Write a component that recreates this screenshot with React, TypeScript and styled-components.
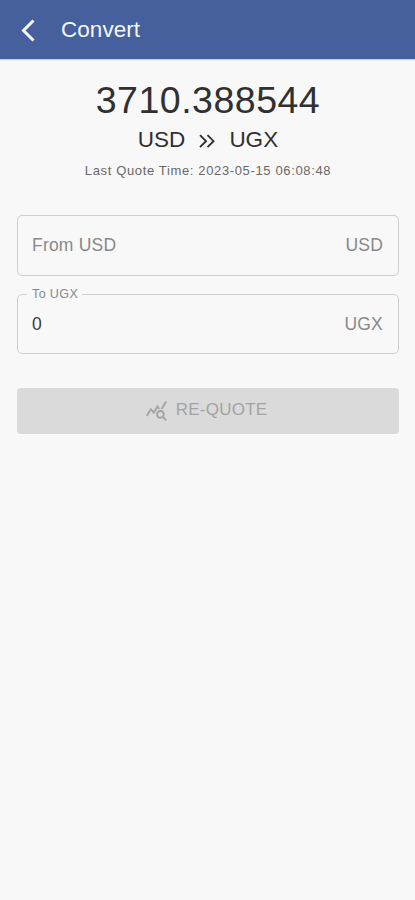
import React from "react";
import styled, { createGlobalStyle } from "styled-components";
import { MdQueryStats } from "react-icons/md";

const GlobalStyle = createGlobalStyle`
  * { box-sizing: border-box; }
  body {
    margin: 0;
    background: #f8f8f8;
    font-family: "Liberation Sans", Arial, sans-serif;
  }
`;

const Screen = styled.div`
  min-height: 900px;
  background: #f8f8f8;
`;

const AppBar = styled.header`
  display: flex;
  align-items: center;
  height: 59px;
  padding-left: 20px;
  background: #46609d;
  color: #f4f6fc;
  box-shadow: 0 1px 1px #c3cbe0;
`;

const BackButton = styled.button`
  display: flex;
  width: 16px;
  height: 26px;
  padding: 0;
  border: 0;
  background: none;
  color: inherit;
`;

const Title = styled.h1`
  margin: 0 0 0 25px;
  font-size: 22.5px;
  line-height: 26px;
  font-weight: 400;
  letter-spacing: 0.05px;
`;

const Content = styled.main`
  padding: 0 16px 0 17px;
`;

const Quote = styled.section`
  display: flex;
  flex-direction: column;
  align-items: center;
  padding-top: 19px;
`;

const Rate = styled.div`
  font-size: 37.5px;
  line-height: 44px;
  letter-spacing: 0.5px;
  color: #303030;
`;

const Pair = styled.div`
  display: flex;
  align-items: center;
  gap: 13px;
  margin-top: 4px;
  font-size: 22.5px;
  line-height: 28px;
  color: #303030;
`;

const QuoteTime = styled.div`
  margin-top: 8px;
  font-size: 13px;
  line-height: 18px;
  letter-spacing: 0.64px;
  color: #686868;
`;

const Fields = styled.div`
  display: flex;
  flex-direction: column;
  gap: 12px;
  margin-top: 35px;
`;

const Field = styled.fieldset`
  min-width: 0;
  margin: 0;
  padding: 0 15px 0 14px;
  border: 1px solid #cfcfcf;
  border-radius: 5px;
  font-size: 17.5px;
  letter-spacing: 0.2px;
  color: #888;
`;

const FieldRow = styled.div<{ $height: number; $lift?: number }>`
  display: flex;
  align-items: center;
  justify-content: space-between;
  height: ${(p) => p.$height}px;
  padding-bottom: ${(p) => p.$lift ?? 0}px;
`;

const Legend = styled.legend`
  margin-left: -5px;
  padding: 0 4px 0 5px;
  font-size: 12.5px;
  line-height: 13px;
  letter-spacing: 0.4px;
`;

const Value = styled.span<{ $filled?: boolean }>`
  color: ${(p) => (p.$filled ? "#383838" : "#888")};
`;

const Requote = styled.button`
  display: flex;
  align-items: center;
  justify-content: center;
  gap: 8px;
  width: 100%;
  height: 46px;
  margin-top: 34px;
  padding: 0 4px 2px 0;
  border: 0;
  border-radius: 4px;
  background: #dadada;
  color: #a3a3a3;
  font: 400 17px/24px "Liberation Sans", Arial, sans-serif;
  letter-spacing: 0.25px;
`;

const RequoteIcon = styled(MdQueryStats)`
  width: 23px;
  height: 23px;
  margin-top: 1px;
`;

export default function App() {
  return (
    <Screen>
      <GlobalStyle />
      <AppBar>
        <BackButton aria-label="Back">
          <svg width="16" height="26" viewBox="0 0 16 26" fill="none" stroke="currentColor" strokeWidth="3">
            <path d="M13.5 3.5L3.5 13.5L13.5 23.5" />
          </svg>
        </BackButton>
        <Title>Convert</Title>
      </AppBar>
      <Content>
        <Quote>
          <Rate>3710.388544</Rate>
          <Pair>
            <span>USD</span>
            <svg width="18" height="16" viewBox="0 0 18 16" fill="none" stroke="currentColor" strokeWidth="1.9">
              <path d="M2 3.2L8 9.2L2 15.2M9.5 3.2L15.5 9.2L9.5 15.2" />
            </svg>
            <span>UGX</span>
          </Pair>
          <QuoteTime>Last Quote Time: 2023-05-15 06:08:48</QuoteTime>
        </Quote>
        <Fields>
          <Field>
            <FieldRow $height={59}>
              <Value>From USD</Value>
              <span>USD</span>
            </FieldRow>
          </Field>
          <Field>
            <Legend>To UGX</Legend>
            <FieldRow $height={52} $lift={6}>
              <Value $filled>0</Value>
              <span>UGX</span>
            </FieldRow>
          </Field>
        </Fields>
        <Requote disabled>
          <RequoteIcon />
          RE-QUOTE
        </Requote>
      </Content>
    </Screen>
  );
}
